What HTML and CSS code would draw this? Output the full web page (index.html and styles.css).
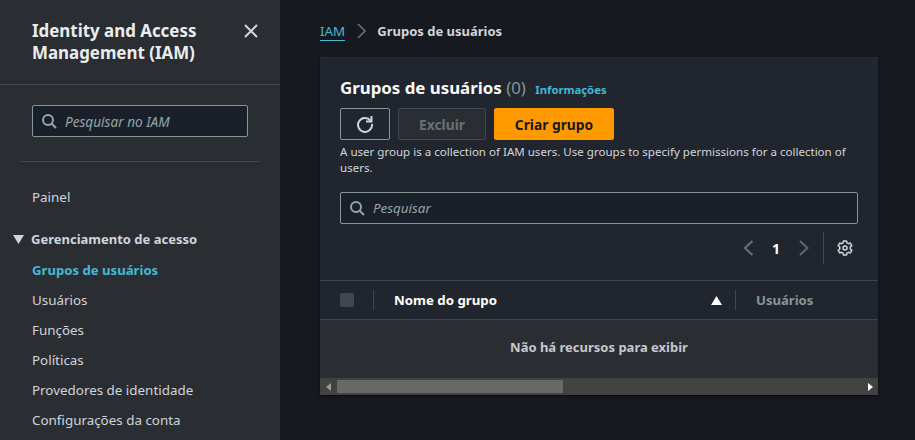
FILE: index.html
```html
<!DOCTYPE html>
<html lang="pt">
<head>
<meta charset="utf-8">
<title>Grupos de usuários</title>
<link rel="stylesheet" href="styles.css">
</head>
<body>
<div class="app">
  <nav class="sidebar">
    <header class="side-head">
      <h2 class="side-title">Identity and Access Management (IAM)</h2>
      <svg class="close" width="16" height="16" viewBox="0 0 16 16"><path d="M2 2l12 12M14 2L2 14" fill="none" stroke="#d1d5db" stroke-width="2"/></svg>
    </header>
    <div class="side-search-wrap">
      <div class="search side-search">
        <svg class="search-icon" width="16" height="16" viewBox="0 0 16 16"><circle cx="7" cy="7" r="5" fill="none" stroke="#95a5a6" stroke-width="2"/><path d="M10.500 10.500L15 15" stroke="#95a5a6" stroke-width="2" fill="none"/></svg>
        <span class="placeholder">Pesquisar no IAM</span>
      </div>
    </div>
    <hr class="side-rule">
    <a class="nav-link painel">Painel</a>
    <div class="nav-group">
      <svg class="caret" width="11" height="9" viewBox="0 0 11 9"><path d="M0 0h11L5.500 9z" fill="#d1d5db"/></svg>
      <span>Gerenciamento de acesso</span>
    </div>
    <a class="nav-link active">Grupos de usuários</a>
    <a class="nav-link">Usuários</a>
    <a class="nav-link">Funções</a>
    <a class="nav-link">Políticas</a>
    <a class="nav-link">Provedores de identidade</a>
    <a class="nav-link">Configurações da conta</a>
  </nav>
  <main class="main">
    <div class="crumbs">
      <a class="crumb-link">IAM</a>
      <svg class="crumb-sep" width="12" height="16" viewBox="0 0 12 16"><path d="M2 1l7 7-7 7" fill="none" stroke="#687078" stroke-width="1.700"/></svg>
      <span class="crumb-current">Grupos de usuários</span>
    </div>
    <section class="panel">
      <div class="panel-head">
        <h1 class="panel-title">Grupos de usuários <span class="count">(0)</span> <a class="info">Informações</a></h1>
        <div class="actions">
          <button class="btn btn-icon" type="button">
            <svg width="18" height="18" viewBox="0 0 18 18"><path d="M14.500 5.500A7 7 0 1 0 16 9" fill="none" stroke="#d1d5db" stroke-width="2"/><path d="M15.500 1v5.500H10" fill="none" stroke="#d1d5db" stroke-width="2"/></svg>
          </button>
          <button class="btn btn-disabled" type="button">Excluir</button>
          <button class="btn btn-primary" type="button">Criar grupo</button>
        </div>
        <p class="desc">A user group is a collection of IAM users. Use groups to specify permissions for a collection of users.</p>
        <div class="search panel-search">
          <svg class="search-icon" width="16" height="16" viewBox="0 0 16 16"><circle cx="7" cy="7" r="5" fill="none" stroke="#95a5a6" stroke-width="2"/><path d="M10.500 10.500L15 15" stroke="#95a5a6" stroke-width="2" fill="none"/></svg>
          <span class="placeholder panel-placeholder">Pesquisar</span>
        </div>
        <div class="pager">
          <svg width="12" height="16" viewBox="0 0 12 16"><path d="M10.500 1L3 8l7.500 7" fill="none" stroke="#687078" stroke-width="2"/></svg>
          <span class="page-num">1</span>
          <svg width="12" height="16" viewBox="0 0 12 16"><path d="M2 1l7.500 7L2 15" fill="none" stroke="#5f666e" stroke-width="2"/></svg>
          <span class="pager-rule"></span>
          <svg class="gear" width="16" height="16" viewBox="0 0 16 16"><path d="M6.500 .9h3l.4 2 1.500.8 1.900-.7 1.500 2.600-1.500 1.300v2.200l1.500 1.300-1.500 2.600-1.900-.7-1.500.8-.4 2h-3l-.4-2-1.500-.8-1.900.7L1.200 10.400l1.500-1.300V6.900L1.200 5.600l1.500-2.600 1.900.7 1.500-.8z" fill="none" stroke="#d1d5db" stroke-width="1.500" stroke-linejoin="round"/><circle cx="8" cy="8" r="2" fill="none" stroke="#d1d5db" stroke-width="1.500"/></svg>
        </div>
      </div>
      <div class="thead">
        <span class="check"></span>
        <span class="th-rule"></span>
        <span class="th-name">Nome do grupo</span>
        <svg class="sort" width="11" height="9" viewBox="0 0 11 9"><path d="M0 9h11L5.500 0z" fill="#fff"/></svg>
        <span class="th-rule th-rule-2"></span>
        <span class="th-users">Usuários</span>
      </div>
      <div class="empty">Não há recursos para exibir</div>
      <div class="scrollbar">
        <svg class="arrow" width="5" height="8" viewBox="0 0 5 8"><path d="M5 0v8L0 4z" fill="#9a9a9a"/></svg>
        <div class="thumb"></div>
        <svg class="arrow arrow-right" width="5" height="8" viewBox="0 0 5 8"><path d="M0 0v8l5-4z" fill="#fff"/></svg>
      </div>
    </section>
  </main>
</div>
</body>
</html>
```

FILE: styles.css
```css
* { box-sizing: border-box; }
html, body { margin: 0; height: 100%; }
body {
  background: #16191f;
  color: #d1d5db;
  font-family: "Noto Sans", "Open Sans", sans-serif;
  font-size: 13.4px;
  overflow: hidden;
}
.app { display: flex; height: 440px; }
.sidebar {
  width: 280px;
  flex: none;
  background: #2a2e33;
  display: flex;
  flex-direction: column;
}
.side-head {
  height: 85px;
  padding: 20px 21px 0 32px;
  border-bottom: 1px solid #414750;
  display: flex;
  justify-content: space-between;
  align-items: flex-start;
}
.side-title {
  margin: 0;
  width: 190px;
  font-size: 16.900px;
  line-height: 22px;
  font-weight: 700;
  color: #eaeded;
}
.close { margin: 3px 0 0; }
.side-search-wrap { padding: 20px 32px 0; }
.search {
  display: flex;
  align-items: center;
  gap: 8px;
  background: #1a2029;
  border: 1px solid #879596;
  border-radius: 2px;
  padding-left: 8px;
}
.side-search { width: 216px; height: 32px; }
.panel-search { height: 32px; margin-top: 16px; }
.placeholder { font-style: italic; font-size: 13.600px; color: #95a5a6; }
.panel-placeholder { font-size: 13.400px; }
.side-rule {
  margin: 24px 20px 0;
  border: 0;
  border-top: 1px solid #414750;
}
.nav-link {
  display: block;
  padding-left: 32px;
  height: 30px;
  line-height: 30px;
  font-size: 13.400px;
  color: #d1d5db;
}
.painel { margin-top: 20px; }
.nav-group {
  margin-top: 12px;
  margin-bottom: 1px;
  padding-left: 13px;
  height: 30px;
  display: flex;
  align-items: center;
  gap: 7px;
  font-weight: 700;
  font-size: 13px;
}
.nav-link.active { color: #44b9d6; font-weight: 700; font-size: 13.150px; }
.main { flex: 1; min-width: 0; padding: 0 37px 0 40px; }
.crumbs {
  height: 57px;
  display: flex;
  align-items: center;
  padding-top: 5px;
  gap: 11px;
}
.crumb-link {
  font-size: 13.400px;
  line-height: 18px;
  color: #44b9d6;
  border-bottom: 1px solid #44b9d6;
}
.crumb-current { font-weight: 700; font-size: 13px; color: #d1d5db; margin-left: -2px; }
.panel {
  background: #21262e;
  height: 338px;
  box-shadow: 0 1px 2px rgba(0, 0, 0, .6);
  border-top: 1px solid #2a2e33;
  display: flex;
  flex-direction: column;
}
.panel-head { padding: 18px 20px 0; height: 222px; flex: none; }
.panel-title {
  margin: 0;
  font-size: 16.850px;
  line-height: 24px;
  font-weight: 700;
  color: #fafafa;
}
.count { font-weight: 400; color: #879596; }
.info { font-size: 11.300px; font-weight: 700; color: #44b9d6; margin-left: 5px; }
.actions { display: flex; gap: 8px; margin-top: 6px; }
.btn {
  height: 32px;
  border-radius: 2px;
  font-family: inherit;
  font-size: 13.800px;
  font-weight: 700;
  padding: 0;
  display: flex;
  align-items: center;
  justify-content: center;
}
.btn-icon { width: 50px; background: transparent; border: 1px solid #879596; }
.btn-disabled { width: 88px; background: #2a2e33; border: 1px solid #414750; color: #687078; }
.btn-primary { width: 120px; background: #ff9900; border: 1px solid #ff9900; color: #16191f; }
.desc {
  margin: 4px 0 0;
  font-size: 11.550px;
  line-height: 16px;
  color: #d1d5db;
}
.pager {
  display: flex;
  align-items: center;
  justify-content: flex-end;
  height: 32px;
  margin-top: 8px;
  padding-right: 5px;
}
.page-num { width: 44px; text-align: center; font-weight: 700; color: #fff; font-size: 14px; }
.pager-rule { width: 1px; height: 32px; background: #414750; margin: 0 13px; }
.thead {
  height: 40px;
  flex: none;
  display: flex;
  align-items: center;
  border-top: 1px solid #414750;
  border-bottom: 1px solid #414750;
  padding-left: 20px;
}
.check { width: 14px; height: 14px; background: #414750; border-radius: 2px; }
.th-rule { width: 1px; height: 20px; background: #414750; margin-left: 19px; }
.th-name { margin-left: 20px; width: 317px; font-weight: 700; color: #fff; font-size: 13.250px; }
.sort { margin-left: 0; }
.th-rule-2 { margin-left: 13px; }
.th-users { margin-left: 20px; font-weight: 700; color: #879596; font-size: 13.100px; }
.empty {
  flex: 1;
  background: #2a2e33;
  display: flex;
  align-items: center;
  justify-content: center;
  padding-bottom: 4px;
  font-weight: 700;
  font-size: 13px;
  color: #c4c8cc;
}
.scrollbar {
  height: 17px;
  flex: none;
  background: #424242;
  display: flex;
  align-items: center;
  padding: 0 5px 0 6px;
}
.arrow { flex: none; }
.thumb { width: 226px; height: 13px; background: #686868; margin-left: 6px; }
.arrow-right { margin-left: auto; }
```
